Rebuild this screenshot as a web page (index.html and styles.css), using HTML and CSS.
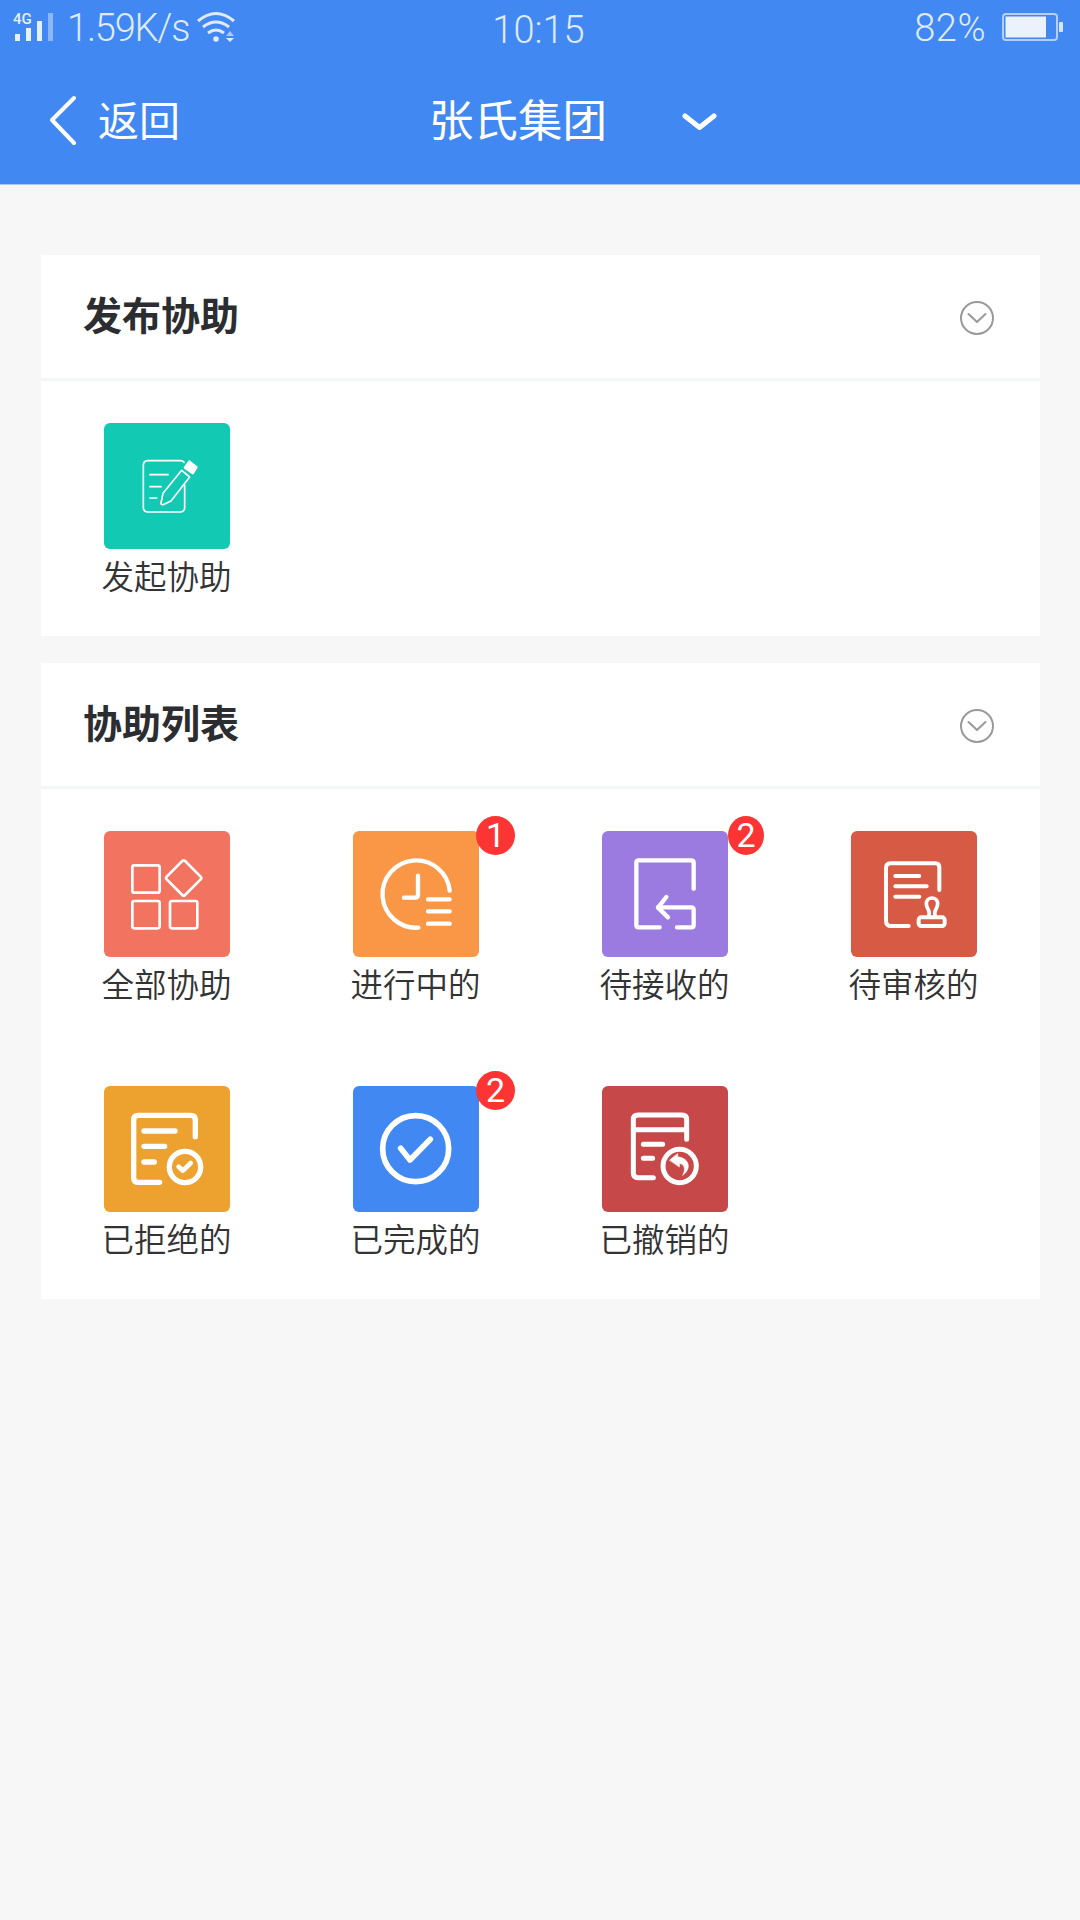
FILE: index.html
```html
<!DOCTYPE html>
<html lang="zh-CN">
<head>
    <meta charset="UTF-8">
    <meta name="viewport" content="width=device-width, initial-scale=1.0">
    <title>张氏集团</title>
    <link rel="stylesheet" href="styles.css">
</head>
<body>
    <header class="top">
        <div class="status-bar">
            <div class="status-left">
                <div class="signal">
                    <svg width="42" height="32" viewBox="0 0 42 32" fill="#e6effe">
                        <text x="0" y="14" class="network">4G</text>
                        <rect x="2" y="24" width="5" height="7"/>
                        <rect x="13" y="18" width="5" height="13"/>
                        <rect x="24" y="11" width="5" height="20"/>
                        <rect x="35" y="3" width="5" height="28" opacity="0.45"/>
                    </svg>
                </div>
                <span class="speed">1.59K/s</span>
                <svg class="wifi" width="38" height="32" viewBox="0 0 38 32" fill="none" stroke="#dfeafe" stroke-width="3">
                    <path d="M1 11Q19 -4 37 11"/>
                    <path d="M6 17Q19 7 32 17"/>
                    <path d="M11 23Q19 17 27 23"/>
                    <circle cx="19" cy="29" r="2.8" fill="#dfeafe" stroke="none"/>
                    <path d="M29 26l4-5 4 5z" fill="#a9c8fa" stroke="none"/>
                    <path d="M29 28h8l-4 4z" fill="#dfeafe" stroke="none"/>
                </svg>
            </div>
            <span class="time">10:15</span>
            <div class="status-right">
                <span class="percent">82%</span>
                <svg width="62" height="28" viewBox="0 0 62 28">
                    <rect x="1" y="1" width="54" height="26" rx="3" fill="none" stroke="#b4cffb" stroke-width="2"/>
                    <rect x="3.5" y="3.5" width="40.5" height="21" fill="#ebf2fe"/>
                    <rect x="57" y="9" width="4" height="10" rx="1" fill="#d6e4fd"/>
                </svg>
            </div>
        </div>
        <nav class="nav-bar">
            <a class="back">
                <svg width="28" height="50" viewBox="0 0 28 50" fill="none" stroke="#fff" stroke-width="4" stroke-linecap="round" stroke-linejoin="round">
                    <path d="M25 3L3 25l22 23"/>
                </svg>
                <span>返回</span>
            </a>
            <h1>张氏集团</h1>
            <svg class="drop" width="36" height="20" viewBox="0 0 36 20" fill="none" stroke="#fff" stroke-width="5" stroke-linecap="round" stroke-linejoin="round">
                <path d="M4 4l14.500 11.500L33 4"/>
            </svg>
        </nav>
    </header>

    <main class="content">
        <section class="card">
            <div class="card-head">
                <h2>发布协助</h2>
                <svg class="toggle" width="36" height="36" viewBox="0 0 36 36">
                    <circle cx="18" cy="18" r="16"/>
                    <path d="M9.500 14l8.500 8 8.500-8"/>
                </svg>
            </div>
            <div class="menu">
                <a class="item">
                    <div class="tile green">
                        <svg viewBox="0 0 378 378" stroke-width="5">
                            <path d="M240 118Q236 113 229 113H132Q118 113 118 127V253Q118 267 132 267H228Q242 267 242 253V186"/>
                            <path d="M138 155H192M138 191H171M138 225H158"/>
                            <path d="M233 142L177 211L171 240Q171 246 177 245L201 234L257 162Z"/>
                            <path class="solid" d="M256 116L277 133L266 150L243 134Z" stroke-width="8"/>
                        </svg>
                    </div>
                    <span class="label">发起协助</span>
                </a>
            </div>
        </section>

        <section class="card">
            <div class="card-head">
                <h2>协助列表</h2>
                <svg class="toggle" width="36" height="36" viewBox="0 0 36 36">
                    <circle cx="18" cy="18" r="16"/>
                    <path d="M9.500 14l8.500 8 8.500-8"/>
                </svg>
            </div>
            <div class="menu">
                <a class="item">
                    <div class="tile coral">
                        <svg viewBox="0 0 378 378" stroke-width="8">
                            <rect x="85" y="103" width="82" height="82" rx="6"/>
                            <rect x="85" y="210" width="82" height="82" rx="6"/>
                            <rect x="198" y="210" width="82" height="82" rx="6"/>
                            <rect x="200" y="102" width="78" height="78" rx="6" transform="rotate(45 239 141)"/>
                        </svg>
                    </div>
                    <span class="label">全部协助</span>
                </a>
                <a class="item">
                    <div class="tile orange">
                        <svg viewBox="0 0 378 378" stroke-width="13">
                            <path d="M290 179A101 101 0 1 0 196 290"/>
                            <path d="M195 134V192Q195 200 187 200H153"/>
                            <path d="M225 205H290M225 241H290M225 278H290"/>
                        </svg>
                        <span class="badge">1</span>
                    </div>
                    <span class="label">进行中的</span>
                </a>
                <a class="item">
                    <div class="tile purple">
                        <svg viewBox="0 0 378 378" stroke-width="13">
                            <path d="M275 173V95Q275 88 268 88H110Q103 88 103 95V282Q103 289 110 289H173"/>
                            <path d="M225 289H268Q275 289 275 282V236Q275 229 268 229H168"/>
                            <path d="M193 198L168 230L198 259"/>
                        </svg>
                        <span class="badge narrow">2</span>
                    </div>
                    <span class="label">待接收的</span>
                </a>
                <a class="item">
                    <div class="tile brick">
                        <svg viewBox="0 0 378 378" stroke-width="12">
                            <path d="M265 177V109Q265 97 253 97H119Q105 97 105 111V269Q105 285 121 285H173"/>
                            <path d="M133 135H205M133 166H227M133 197H205"/>
                            <path d="M233 255C241 242 226 233 226 218A17 17 0 0 1 260 218C260 233 245 242 253 255" stroke-width="11"/>
                            <rect x="203" y="259" width="78" height="26" rx="8" stroke-width="12"/>
                        </svg>
                    </div>
                    <span class="label">待审核的</span>
                </a>
                <a class="item">
                    <div class="tile amber">
                        <svg viewBox="0 0 378 378" stroke-width="16">
                            <path d="M274 152V102Q274 88 260 88H103Q89 88 89 102V275Q89 289 103 289H167"/>
                            <path d="M120 135H213M120 181H182M120 228H151"/>
                            <circle cx="243" cy="243" r="47"/>
                            <path d="M224 242L237 254L260 231" stroke-width="14"/>
                        </svg>
                    </div>
                    <span class="label">已拒绝的</span>
                </a>
                <a class="item">
                    <div class="tile blue">
                        <svg viewBox="0 0 378 378" stroke-width="17">
                            <circle cx="188" cy="188" r="99"/>
                            <path d="M143 187L171 222L232 160"/>
                        </svg>
                        <span class="badge">2</span>
                    </div>
                    <span class="label">已完成的</span>
                </a>
                <a class="item">
                    <div class="tile red">
                        <svg viewBox="0 0 378 378" stroke-width="15">
                            <path d="M254 160V101Q254 87 240 87H108Q94 87 94 101V261Q94 275 108 275H154"/>
                            <path d="M94 131H254M124 175H182M124 217H152"/>
                            <circle cx="233" cy="240" r="50"/>
                            <path class="solid" d="M203 222L227 203V213C254 213 275 243 242 268C253 248 246 234 232 232V242Z" stroke-width="2"/>
                        </svg>
                    </div>
                    <span class="label">已撤销的</span>
                </a>
            </div>
        </section>
    </main>
</body>
</html>
```

FILE: styles.css
```css
* {
    box-sizing: border-box;
}
body {
    margin: 0;
    min-height: 1920px;
    background-color: #f7f7f7;
    color: #333;
    font-family: Roboto, "Noto Sans CJK SC", sans-serif;
}
h1, h2 {
    margin: 0;
}
svg {
    display: block;
}
/* Blue top area */
.top {
    height: 185px;
    background-color: #4188f2;
    border-bottom: 1px solid #a9c8fa;
    color: #fff;
}
.status-bar {
    display: grid;
    grid-template-columns: 1fr auto 1fr;
    height: 56px;
    padding: 0 16px 0 13px;
    font-size: 38px;
    font-weight: 300;
    line-height: 56px;
    color: #dfeafe;
}
.status-left {
    display: flex;
    align-items: flex-start;
}
.signal {
    margin-top: 10px;
}
.network {
    font-size: 15px;
    font-weight: 500;
}
.speed {
    width: 126px;
    margin-left: 12px;
    letter-spacing: -1.2px;
    white-space: nowrap;
}
.wifi {
    margin: 10px 0 0 4px;
}
.time {
    margin-top: 2px;
}
.status-right {
    display: flex;
    justify-content: flex-end;
}
.percent {
    letter-spacing: 0.5px;
}
.status-right svg {
    margin: 13px 0 0 16px;
}
.nav-bar {
    display: flex;
    align-items: center;
    height: 128px;
    padding-left: 49px;
}
.back {
    display: flex;
    align-items: center;
    width: 380px;
    font-size: 41px;
    line-height: 60px;
}
.back span {
    margin-left: 21px;
    padding-top: 4px;
}
.nav-bar h1 {
    padding-top: 4px;
    font-size: 44.500px;
    font-weight: 400;
    line-height: 60px;
}
.drop {
    margin: 3px 0 0 74px;
}
/* Cards */
.content {
    display: flex;
    flex-direction: column;
    gap: 27px;
    padding: 70px 40px 0 41px;
}
.card {
    background-color: #fff;
}
.card-head {
    display: flex;
    justify-content: space-between;
    align-items: center;
    height: 126px;
    padding: 0 45px 0 42px;
    border-bottom: 3px solid #f5f6f8;
}
.card-head h2 {
    font-size: 39px;
    font-weight: 700;
    line-height: 60px;
    color: #2b2d30;
}
.toggle {
    margin-top: 2px;
    fill: none;
    stroke: #999;
    stroke-width: 2;
    stroke-linecap: round;
    stroke-linejoin: round;
}
.menu {
    display: grid;
    grid-template-columns: repeat(4, 249px);
    justify-content: center;
    padding-top: 42px;
}
.item {
    display: flex;
    flex-direction: column;
    align-items: center;
    height: 255px;
}
.card:first-child .item {
    height: 213px;
}
.card:last-child .item:nth-child(n+5) {
    height: 213px;
}
.tile {
    position: relative;
    width: 126px;
    height: 126px;
    border-radius: 6px;
}
.tile svg {
    width: 126px;
    height: 126px;
    fill: none;
    stroke: #fff;
    stroke-linecap: round;
    stroke-linejoin: round;
}
.tile .solid {
    fill: #fff;
}
.green { background-color: #12cab4; }
.coral { background-color: #f2735f; }
.orange { background-color: #f99747; }
.purple { background-color: #9c7be1; }
.brick { background-color: #d75a45; }
.amber { background-color: #eda12f; }
.blue { background-color: #4188f2; }
.red { background-color: #c64848; }
.label {
    margin: 5px 1px 0 0;
    font-size: 32.500px;
    font-weight: 350;
    line-height: 48px;
}
/* Unread count on the tile corner */
.badge {
    position: absolute;
    top: -15px;
    left: 123px;
    width: 39px;
    height: 39px;
    border-radius: 50%;
    background-color: #fd3434;
    color: #fff;
    font-size: 34px;
    line-height: 38px;
    text-align: center;
}
.badge.narrow {
    left: 126px;
    width: 36px;
}
```
